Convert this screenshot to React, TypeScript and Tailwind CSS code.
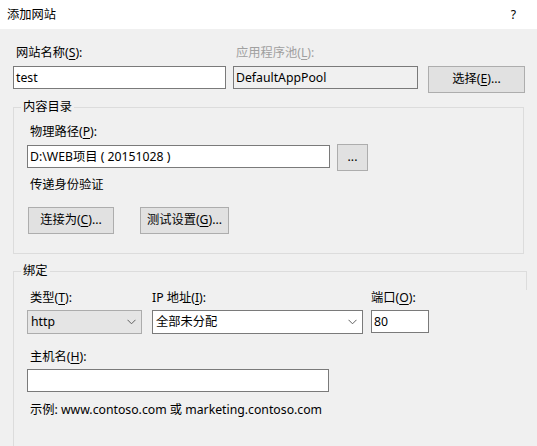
import React from "react";

const font = { fontFamily: '"Noto Sans", "Noto Sans CJK SC", sans-serif' };

function U({ c }: { c: string }) {
  return <span className="underline underline-offset-2">{c}</span>;
}

function Chevron() {
  return (
    <svg width="9" height="6" viewBox="0 0 9 6" className="shrink-0">
      <path d="M0.5 0.8 L4.5 4.8 L8.5 0.8" fill="none" stroke="#606060" strokeWidth="1" />
    </svg>
  );
}

function Btn({ w, children }: { w: string; children: React.ReactNode }) {
  return (
    <div className={`${w} h-[27px] shrink-0 border border-[#adadad] bg-[#e1e1e1] flex items-center justify-center text-black`}>
      {children}
    </div>
  );
}

export default function App() {
  return (
    <div className="w-[537px] h-[446px] overflow-hidden bg-[#f0f0f0] text-[12.25px] text-black" style={font}>
      {/* title bar */}
      <div className="h-[29px] bg-white flex items-center justify-between pl-[7px] pr-[21px]">
        <span className="leading-[16px]">添加网站</span>
        <span className="leading-[16px]">?</span>
      </div>

      <div className="px-[13px]">
        {/* row 1 */}
        <div className="flex pt-[16px]">
          <div className="w-[213px] shrink-0">
            <div className="h-[16px] leading-[16px] pl-[3px] mb-[5px]">
              网站名称(<U c="S" />):
            </div>
            <div className="h-[23px] border border-[#7a7a7a] bg-white flex items-center pl-[2px] leading-[16px]">test</div>
          </div>
          <div className="w-[185px] shrink-0 ml-[7px]">
            <div className="h-[16px] leading-[16px] pl-[3px] mb-[5px] text-[#a0a0a0]">
              应用程序池(<U c="L" />):
            </div>
            <div className="h-[23px] border border-[#7a7a7a] bg-[#f0f0f0] flex items-center pl-[2px] leading-[16px]">
              DefaultAppPool
            </div>
          </div>
          <div className="ml-[10px] pt-[21px]">
            <Btn w="w-[97px]">
              选择(<U c="E" />)...
            </Btn>
          </div>
        </div>

        {/* group 1 */}
        <div className="relative mt-[14px] border border-[#dcdcdc] pl-[13px] pt-[16px] pb-[19px]">
          <span className="absolute left-[7px] -top-[9px] px-[2px] bg-[#f0f0f0] leading-[16px]">内容目录</span>
          <div className="h-[16px] leading-[16px] pl-[3px] mb-[4px]">
            物理路径(<U c="P" />):
          </div>
          <div className="flex items-start">
            <div className="mt-[1px] w-[303px] h-[23px] border border-[#7a7a7a] bg-white flex items-center pl-[2px] leading-[16px] whitespace-pre">
              D:\WEB项目 ( 20151028 )
            </div>
            <div className="ml-[7px]">
              <Btn w="w-[31px]">...</Btn>
            </div>
          </div>
          <div className="h-[16px] leading-[16px] pl-[3px] mt-[6px]">传递身份验证</div>
          <div className="flex mt-[14px]">
            <div className="ml-[1px]">
              <Btn w="w-[86px]">
                连接为(<U c="C" />)...
              </Btn>
            </div>
            <div className="ml-[26px]">
              <Btn w="w-[89px]">
                测试设置(<U c="G" />)...
              </Btn>
            </div>
          </div>
        </div>

        {/* group 2 */}
        <div className="relative mt-[17px] border-l border-t border-[#dcdcdc] w-[514px] pl-[13px] pt-[18px] pb-[60px]">
          <span className="absolute left-[7px] -top-[9px] px-[2px] bg-[#f0f0f0] leading-[16px]">绑定</span>
          <span className="absolute right-0 top-0 w-px h-[18px] bg-[#dcdcdc]" />
          <div className="flex">
            <div className="w-[115px] shrink-0">
              <div className="h-[16px] leading-[16px] pl-[3px] mb-[4px]">
                类型(<U c="T" />):
              </div>
              <div className="h-[24px] border border-[#acacac] bg-[#e5e5e5] flex items-center justify-between pl-[3px] pr-[5px] leading-[16px]">
                <span>http</span>
                <Chevron />
              </div>
            </div>
            <div className="w-[211px] shrink-0 ml-[10px]">
              <div className="h-[16px] leading-[16px] pl-[0px] mb-[4px]">
                IP 地址(<U c="I" />):
              </div>
              <div className="h-[24px] border border-[#7a7a7a] bg-white flex items-center justify-between pl-[3px] pr-[5px] leading-[16px]">
                <span>全部未分配</span>
                <Chevron />
              </div>
            </div>
            <div className="w-[58px] shrink-0 ml-[8px]">
              <div className="h-[16px] leading-[16px] mb-[4px]">
                端口(<U c="O" />):
              </div>
              <div className="h-[23px] border border-[#7a7a7a] bg-white flex items-center pl-[2px] leading-[16px]">80</div>
            </div>
          </div>
          <div className="h-[16px] leading-[16px] pl-[3px] mt-[15px] mb-[4px]">
            主机名(<U c="H" />):
          </div>
          <div className="w-[302px] h-[23px] border border-[#7a7a7a] bg-white" />
          <div className="h-[16px] leading-[16px] pl-[3px] mt-[10px]">
            示例: www.contoso.com 或 marketing.contoso.com
          </div>
        </div>
      </div>
    </div>
  );
}
